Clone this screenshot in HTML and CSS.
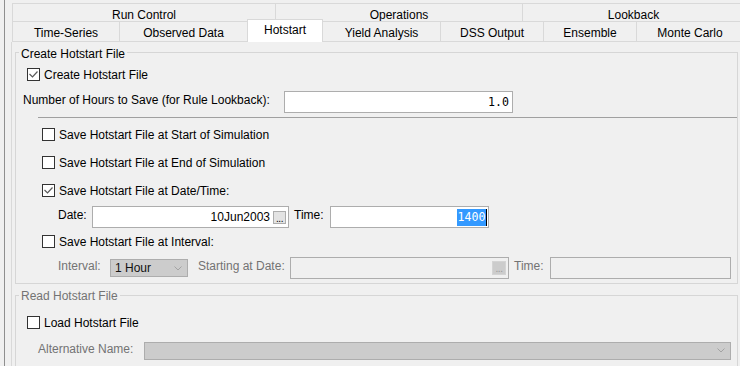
FILE: index.html
```html
<!DOCTYPE html>
<html>
<head>
<meta charset="utf-8">
<link rel="stylesheet" href="styles.css">
</head>
<body>
<div class="window">
  <div class="frame">
    <div class="tabs">
      <div class="tab-row row1">
        <div class="tab t-run">Run Control</div>
        <div class="tab t-ops">Operations</div>
        <div class="tab t-look">Lookback</div>
      </div>
      <div class="tab-row row2">
        <div class="tab t-ts">Time-Series</div>
        <div class="tab t-obs">Observed Data</div>
        <div class="tab t-hot selected">Hotstart</div>
        <div class="tab t-yield">Yield Analysis</div>
        <div class="tab t-dss">DSS Output</div>
        <div class="tab t-ens">Ensemble</div>
        <div class="tab t-mc">Monte Carlo</div>
      </div>
    </div>
    <div class="panel">
      <div class="group g-create">
        <div class="group-title">Create Hotstart File</div>
        <div class="check-row r-create">
          <span class="cb"><svg width="11" height="11" viewBox="0 0 11 11"><path d="M1.5 5 L4.5 8 L9.5 2.5" fill="none" stroke="#5a5a5a" stroke-width="1.2"/></svg></span>
          <span>Create Hotstart File</span>
        </div>
        <div class="field-row r-hours">
          <span class="lbl w-hours-lbl">Number of Hours to Save (for Rule Lookback):</span>
          <div class="input w-hours-in mono"><span class="val">1.0</span></div>
        </div>
        <div class="sep"></div>
        <div class="check-row r-opt r-start">
          <span class="cb"></span>
          <span>Save Hotstart File at Start of Simulation</span>
        </div>
        <div class="check-row r-opt r-next">
          <span class="cb"></span>
          <span>Save Hotstart File at End of Simulation</span>
        </div>
        <div class="check-row r-opt r-next">
          <span class="cb"><svg width="11" height="11" viewBox="0 0 11 11"><path d="M1.5 5 L4.5 8 L9.5 2.5" fill="none" stroke="#5a5a5a" stroke-width="1.2"/></svg></span>
          <span>Save Hotstart File at Date/Time:</span>
        </div>
        <div class="field-row r-date">
          <span class="lbl w-date-lbl">Date:</span>
          <div class="input w-date-in"><span class="val-date">10Jun2003</span><span class="dots-btn">...</span></div>
          <span class="lbl w-time-lbl">Time:</span>
          <div class="input w-time-in mono"><span class="sel">1400</span><span class="caret"></span></div>
        </div>
        <div class="check-row r-opt r-interval">
          <span class="cb"></span>
          <span>Save Hotstart File at Interval:</span>
        </div>
        <div class="field-row r-int-fields">
          <span class="lbl dis w-int-lbl">Interval:</span>
          <div class="combo w-int-combo"><span>1 Hour</span><svg width="8" height="5" viewBox="0 0 8 5"><path d="M0.5 0.5 L4 4 L7.5 0.5" fill="none" stroke="#a3a3a3" stroke-width="1"/></svg></div>
          <span class="lbl dis w-start-lbl">Starting at Date:</span>
          <div class="input disabled w-start-in"><span class="dots-btn dis-btn">...</span></div>
          <span class="lbl dis w-time-lbl">Time:</span>
          <div class="input disabled w-time2-in"></div>
        </div>
      </div>
      <div class="group g-read">
        <div class="group-title dis">Read Hotstart File</div>
        <div class="check-row r-load">
          <span class="cb"></span>
          <span>Load Hotstart File</span>
        </div>
        <div class="field-row r-alt">
          <span class="lbl dis w-alt-lbl">Alternative Name:</span>
          <div class="combo w-alt-combo"><span></span><svg width="8" height="5" viewBox="0 0 8 5"><path d="M0.5 0.5 L4 4 L7.5 0.5" fill="none" stroke="#a3a3a3" stroke-width="1"/></svg></div>
        </div>
      </div>
    </div>
  </div>
</div>
</body>
</html>
```

FILE: styles.css
```css
* { box-sizing: border-box; }
html, body { margin: 0; padding: 0; overflow: hidden; }
body {
  width: 740px;
  height: 366px;
  background: #f0f0f0;
  font-family: "Liberation Sans", Arial, sans-serif;
  font-size: 12px;
  color: #000;
}
.window { padding-left: 4px; height: 366px; overflow: hidden; }
.frame {
  border-left: 1px solid #8f8f8f;
  padding: 3px 0 0 6px;
  height: 100%;
}

/* tabs */
.tabs { margin-left: 1px; overflow: hidden; }
.tab-row { display: flex; }
.row1 { height: 19px; }
.row2 { height: 21px; margin-top: -1px; align-items: flex-end; }
.tab {
  flex: none;
  height: 100%;
  border: 1px solid #d9d9d9;
  background: #f0f0f0;
  text-align: center;
  padding-top: 4px;
  line-height: 14px;
  white-space: nowrap;
}
.tab + .tab { margin-left: -1px; }
.tab.selected {
  height: 23px;
  background: #fff;
  border-bottom: none;
  padding-top: 3px;
  position: relative;
  z-index: 1;
}
.t-run { width: 264px; }
.t-ops { width: 248px; }
.t-look { width: 223px; }
.t-ts { width: 108px; }
.t-obs { width: 129px; }
.t-hot { width: 76px; }
.t-yield { width: 119px; }
.t-dss { width: 104px; }
.t-ens { width: 94px; }
.t-mc { width: 108px; }

/* panel */
.panel {
  border-left: 1px solid #d9d9d9;
  padding: 10px 2px 0 3px;
  height: 324px;
  overflow: hidden;
}
.group { border: 1px solid #d6d6d6; }
.g-create { padding-bottom: 4px; }
.g-read { margin-top: 11px; height: 90px; }
.group-title {
  width: fit-content;
  margin: -6px 0 0 3px;
  padding: 0 2px;
  background: #f0f0f0;
  line-height: 14px;
  height: 14px;
}
.g-read .group-title { margin-top: -7px; }
.dis { color: #737373; }

/* rows */
.check-row { display: flex; align-items: center; gap: 4px; height: 19px; }
.cb {
  flex: none;
  width: 13px;
  height: 13px;
  border: 1px solid #333;
  background: #fff;
  display: flex;
}
.r-create { margin-top: 4px; padding-left: 11px; }
.field-row { display: flex; align-items: center; height: 22px; }
.lbl { flex: none; padding-bottom: 4px; white-space: nowrap; }
.r-hours { margin-top: 7px; padding-left: 7px; }
.sep { margin: 4px 0 0 22px; height: 1px; background: #a0a0a0; }
.r-opt { padding-left: 26px; }
.r-start { margin-top: 7px; }
.r-next { margin-top: 9px; }
.r-date { margin-top: 6px; padding-left: 42px; }
.r-interval { margin-top: 4px; }
.r-int-fields { margin-top: 6px; padding-left: 42px; }
.r-load { margin-top: 10px; padding-left: 11px; }
.r-alt { margin-top: 8px; padding-left: 22px; height: 21px; }

/* inputs */
.input {
  flex: none;
  height: 22px;
  border: 1px solid #adadad;
  background: #fff;
  display: flex;
  align-items: center;
  justify-content: flex-end;
}
.input.disabled { background: #f0f0f0; }
.mono { font-family: "DejaVu Sans Mono", "Liberation Mono", monospace; font-size: 11.6px; }
.w-hours-lbl { width: 261px; }
.w-hours-in { width: 229px; padding-right: 3px; }
.w-date-lbl { width: 34px; }
.w-date-in { width: 197px; padding-right: 2px; }
.w-time-lbl { width: 36px; margin-left: 5px; }
.w-time-in { width: 159px; padding-right: 1px; }
.w-int-lbl { width: 52px; }
.w-int-combo { width: 78px; }
.w-start-lbl { width: 92px; margin-left: 10px; }
.w-start-in { width: 219px; padding-right: 2px; }
.w-time2-in { width: 181px; }
.w-alt-lbl { width: 106px; }
.w-alt-combo { width: 587px; height: 21px; padding-right: 6px; }

.dots-btn {
  flex: none;
  width: 13px;
  height: 13px;
  margin-left: 3px;
  border: 1px solid #adadad;
  background: #e3e3e3;
  font-size: 10px;
  line-height: 13px;
  text-align: center;
  letter-spacing: -0.5px;
  color: #000;
}
.dis-btn {
  width: 14px;
  height: 14px;
  border-color: #d4d4d4;
  background: #cccccc;
  color: #9a9a9a;
  line-height: 14px;
}
.sel {
  background: #3399ff;
  color: #fff;
  line-height: 17px;
  padding: 0 0.5px;
}
.caret { width: 1px; height: 17px; background: #000; }

.combo {
  flex: none;
  height: 18px;
  border: 1px solid #adadad;
  background: #cccccc;
  display: flex;
  align-items: center;
  justify-content: space-between;
  padding: 0 5px 0 4px;
  color: #111;
}
```
